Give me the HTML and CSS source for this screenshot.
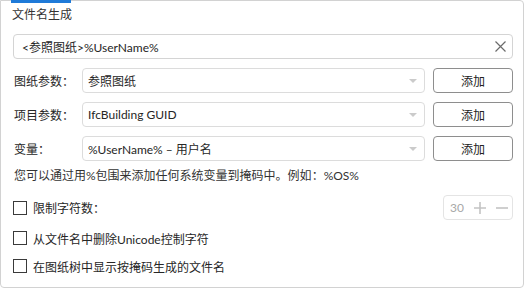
FILE: index.html
```html
<!DOCTYPE html>
<html lang="zh-CN">
<head>
    <meta charset="UTF-8">
    <title>文件名生成</title>
    <link rel="stylesheet" href="styles.css">
</head>
<body>
    <div class="panel">
        <div class="panel-title">文件名生成</div>

        <div class="mask-input">
            <span class="mask-text">&lt;参照图纸&gt;%UserName%</span>
            <svg class="clear-icon" width="11" height="11" viewBox="0 0 11 11">
                <path d="M0.5 0.5 L10.5 10.5 M10.5 0.5 L0.5 10.5" stroke="#6b6b6b" stroke-width="1.2" fill="none"/>
            </svg>
        </div>

        <div class="param-row">
            <span class="param-label">图纸参数<span class="colon">：</span></span>
            <div class="combo"><span>参照图纸</span><i class="arrow"></i></div>
            <button class="add-btn">添加</button>
        </div>
        <div class="param-row">
            <span class="param-label">项目参数<span class="colon">：</span></span>
            <div class="combo"><span>IfcBuilding GUID</span><i class="arrow"></i></div>
            <button class="add-btn">添加</button>
        </div>
        <div class="param-row">
            <span class="param-label">变量<span class="colon">：</span></span>
            <div class="combo"><span>%UserName% – 用户名</span><i class="arrow"></i></div>
            <button class="add-btn">添加</button>
        </div>

        <p class="hint">您可以通过用%包围来添加任何系统变量到掩码中。例如<span class="colon">：</span>%OS%</p>

        <div class="check-row first">
            <label class="check"><span class="box"></span><span>限制字符数<span class="colon">：</span></span></label>
            <div class="spinner">
                <span class="num">30</span>
                <svg width="12" height="12" viewBox="0 0 12 12"><path d="M6 0 V12 M0 6 H12" stroke="#c4c4c4" stroke-width="1.6"/></svg>
                <svg width="12" height="12" viewBox="0 0 12 12"><path d="M0 6 H12" stroke="#c4c4c4" stroke-width="1.6"/></svg>
            </div>
        </div>
        <div class="check-row">
            <label class="check"><span class="box"></span>从文件名中删除Unicode控制字符</label>
        </div>
        <div class="check-row last">
            <label class="check"><span class="box"></span>在图纸树中显示按掩码生成的文件名</label>
        </div>
    </div>
</body>
</html>
```

FILE: styles.css
```css
body {
    margin: 0;
    font-family: Lato, "Noto Sans CJK SC", sans-serif;
    font-size: 12px;
    color: #262626;
    background: #fff;
}
.panel {
    position: relative;
    width: 524px;
    height: 288px;
    box-sizing: border-box;
    border: 1px solid #d2d2d2;
    border-radius: 0 4px 4px 4px;
    padding: 4px 10px 0 12px;
}
.panel::before {
    content: "";
    position: absolute;
    left: 10px;
    top: -1px;
    width: 60px;
    height: 3px;
    background: #1f7ad8;
}
.panel-title {
    line-height: 20px;
    margin-left: -1px;
    color: #333;
}
.colon {
    font-family: "Noto Sans CJK JP", sans-serif;
}
.mask-input {
    margin-top: 9px;
    height: 25px;
    box-sizing: border-box;
    border: 1px solid #d4d4d4;
    border-radius: 4px;
    display: flex;
    align-items: center;
    padding: 0 6px 0 8px;
}
.mask-text {
    flex: 1;
}
.param-row {
    margin-top: 9px;
    display: flex;
    align-items: center;
    gap: 8px;
    height: 25px;
}
.param-label {
    flex: none;
    width: 60px;
    padding-left: 1px;
    white-space: nowrap;
}
.combo {
    flex: 1;
    height: 25px;
    box-sizing: border-box;
    border: 1px solid #dcdcdc;
    border-radius: 4px;
    display: flex;
    align-items: center;
    justify-content: space-between;
    padding: 0 7px 0 5px;
}
.arrow {
    width: 0;
    height: 0;
    border-left: 4px solid transparent;
    border-right: 4px solid transparent;
    border-top: 4px solid #cbcbcb;
}
.add-btn {
    flex: none;
    width: 80px;
    height: 25px;
    border: 1px solid #8e8e8e;
    border-radius: 4px;
    background: #fff;
    font: inherit;
    color: #222;
    padding: 0;
}
.hint {
    margin: 4px 0 0 1px;
    line-height: 20px;
    color: #333;
}
.check-row {
    margin-top: 8px;
    display: flex;
    align-items: center;
    justify-content: space-between;
    height: 20px;
}
.check-row.first {
    margin-top: 9px;
    height: 25px;
}
.check-row.last {
    margin-top: 8px;
}
.check {
    display: flex;
    align-items: center;
    gap: 6px;
}
.box {
    width: 14px;
    height: 14px;
    box-sizing: border-box;
    border: 1px solid #3a3a3a;
    background: #fff;
}
.spinner {
    width: 70px;
    height: 25px;
    box-sizing: border-box;
    border: 1px solid #e4e4e4;
    border-radius: 4px;
    display: flex;
    align-items: center;
    gap: 10px;
    padding-left: 6px;
    color: #a8a8a8;
}
.num {
    width: 14px;
}
```
